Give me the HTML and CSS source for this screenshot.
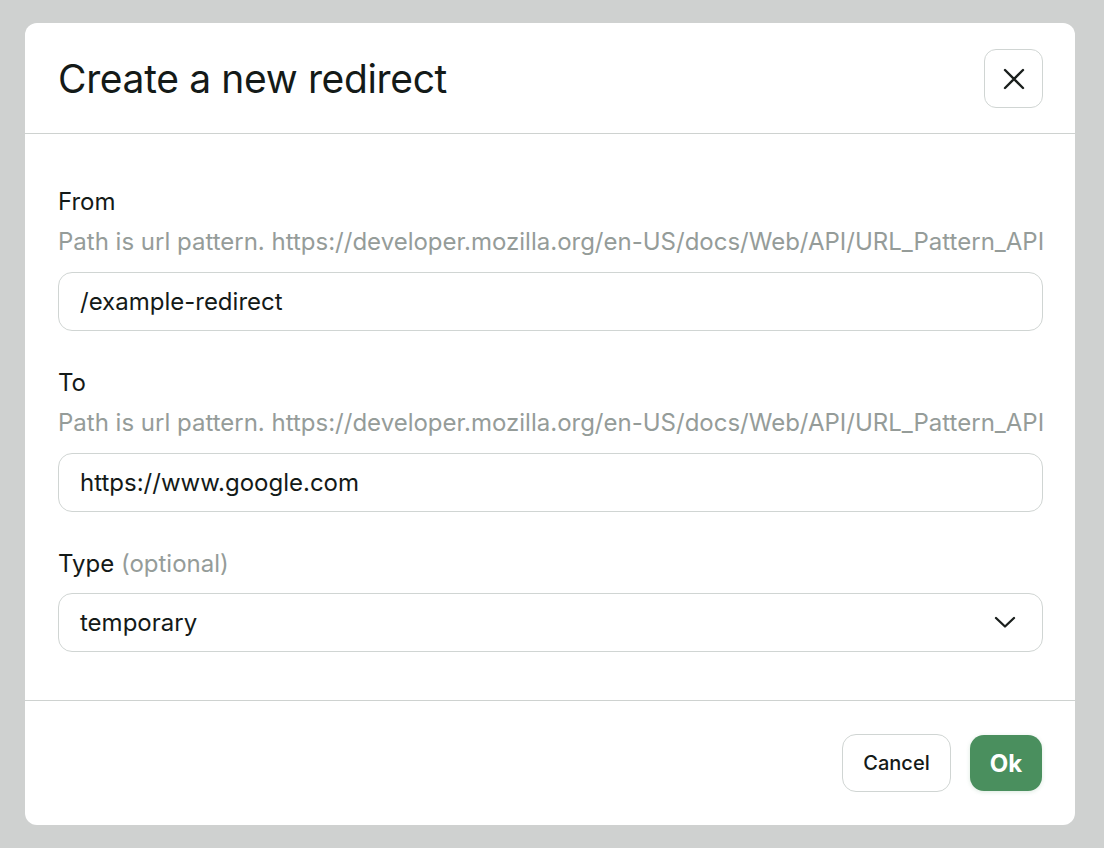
FILE: index.html
```html
<!DOCTYPE html>
<html lang="en">
<head>
<meta charset="utf-8">
<title>Create a new redirect</title>
<link rel="stylesheet" href="styles.css">
</head>
<body>
<div class="backdrop">
  <div class="dialog">
    <div class="dialog-header">
      <h1 class="dialog-title">Create a new redirect</h1>
      <button class="close-btn" aria-label="Close">
        <svg width="22" height="22" viewBox="0 0 22 22"><path d="M2 2 L20 20 M20 2 L2 20" stroke="#1a1f1d" stroke-width="2.4" stroke-linecap="round" fill="none"/></svg>
      </button>
    </div>
    <div class="dialog-body">
      <div class="field">
        <label class="field-label">From</label>
        <div class="field-hint">Path is url pattern. https://developer.mozilla.org/en-US/docs/Web/API/URL_Pattern_API</div>
        <div class="input">/example-redirect</div>
      </div>
      <div class="field">
        <label class="field-label">To</label>
        <div class="field-hint">Path is url pattern. https://developer.mozilla.org/en-US/docs/Web/API/URL_Pattern_API</div>
        <div class="input">https://www.google.com</div>
      </div>
      <div class="field">
        <label class="field-label">Type <span class="optional">(optional)</span></label>
        <div class="input select">
          <span>temporary</span>
          <svg width="22" height="12" viewBox="0 0 22 12"><path d="M2 2 L11 10.5 L20 2" stroke="#1a1f1d" stroke-width="2.3" stroke-linecap="round" stroke-linejoin="round" fill="none"/></svg>
        </div>
      </div>
    </div>
    <div class="dialog-footer">
      <button class="btn btn-secondary">Cancel</button>
      <button class="btn btn-primary">Ok</button>
    </div>
  </div>
</div>
</body>
</html>
```
FILE: styles.css
```css
* { box-sizing: border-box; }
html, body {
  margin: 0;
  padding: 0;
  background: #cfd1d0;
  font-family: Inter, "Noto Sans", sans-serif;
  color: #141a18;
}
.backdrop {
  width: 1104px;
  height: 848px;
  padding: 23px 29px 23px 25px;
}
.dialog {
  width: 1050px;
  height: 802px;
  background: #fff;
  border-radius: 12px;
  display: flex;
  flex-direction: column;
  overflow: hidden;
}
.dialog-header {
  display: flex;
  align-items: center;
  justify-content: space-between;
  padding: 0 32px 0 33px;
  height: 111px;
  border-bottom: 1px solid #ced2d0;
}
.dialog-title {
  margin: 0;
  font-size: 39px;
  font-weight: 400;
  letter-spacing: -0.35px;
  color: #141a18;
  padding-top: 1px;
}
.close-btn {
  width: 59px;
  height: 59px;
  border: 1.5px solid #d0d5d3;
  border-radius: 12px;
  background: #fff;
  display: flex;
  align-items: center;
  justify-content: center;
  padding: 0;
  margin-top: 1px;
}
.dialog-body {
  padding: 53px 32px 48px 33px;
  display: flex;
  flex-direction: column;
  gap: 37px;
  border-bottom: 1px solid #ced2d0;
}
.field {
  display: flex;
  flex-direction: column;
}
.field-label {
  font-size: 24px;
  line-height: 30px;
  color: #141a18;
}
.optional { color: #959c99; }
.field-hint {
  margin-top: 10px;
  font-size: 24px;
  line-height: 30px;
  color: #959c99;
  white-space: nowrap;
}
.field-hint + .input { margin-top: 15px; }
.field-label + .input { margin-top: 14px; }
.input {
  height: 59px;
  border: 1.5px solid #d0d5d3;
  border-radius: 14px;
  padding: 0 21px 1px;
  display: flex;
  align-items: center;
  font-size: 24px;
  color: #141a18;
}
.select {
  justify-content: space-between;
  padding-right: 26px;
}
.dialog-footer {
  flex: 1;
  display: flex;
  justify-content: flex-end;
  align-items: center;
  gap: 19px;
  padding: 0 33px 0 0;
}
.btn {
  font-family: Inter, "Noto Sans", sans-serif;
  height: 58px;
  border-radius: 14px;
  font-size: 20px;
  padding: 0;
}
.btn-secondary {
  width: 109px;
  border: 1.5px solid #d0d5d3;
  background: #fff;
  color: #141a18;
  font-weight: 500;
}
.btn-primary {
  width: 72px;
  height: 56px;
  border: none;
  background: #4a8f5e;
  color: #fff;
  font-weight: 700;
  font-size: 24px;
  box-shadow: 0 1px 4px rgba(74,143,94,0.2);
}
```
